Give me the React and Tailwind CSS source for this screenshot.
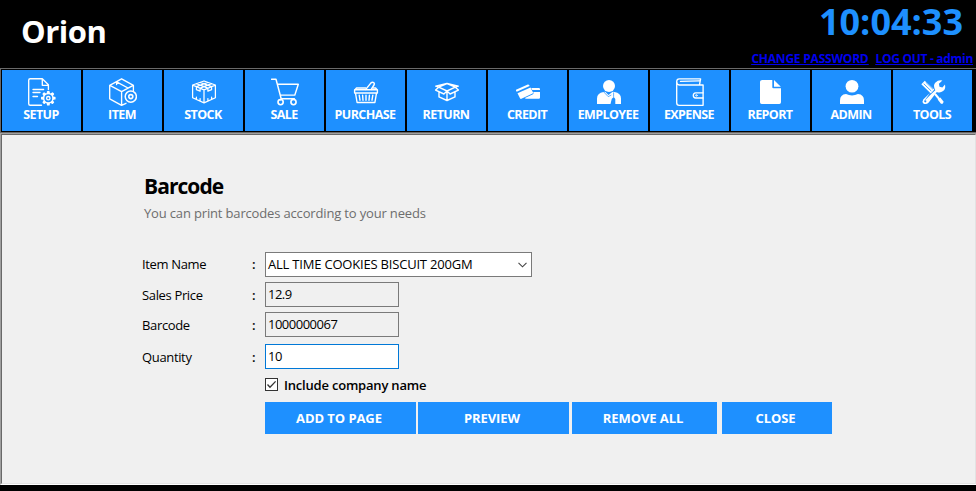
import React from "react";

const line = { fill: "none", stroke: "white", strokeWidth: 1.35, strokeLinejoin: "round", strokeLinecap: "round" };

function Icon({ children }) {
  return (
    <svg viewBox="0 0 28 28" className="ml-[26px] block size-7 shrink-0 self-start" {...line}>
      {children}
    </svg>
  );
}

const teeth = [0, 45, 90, 135, 180, 225, 270, 315];

const icons = {
  setup: (
    <>
      <path d="M13.5 27.2H2.2Q.7 27.2.7 25.7V2.2Q.7.7 2.2.7H14.3L20.4 6.8V11.5M14.3.9V7.3H20.4M5 11.5H15.6M5 14.5H12M5 18.5H9.5" />
      <circle cx="20.3" cy="20.2" r="4.7" strokeWidth="1.5" />
      <circle cx="20.3" cy="20.2" r="1.7" />
      {teeth.map((a) => (
        <path key={a} d="M19.4 15L19.6 13.6H21L21.2 15Z" fill="white" transform={`rotate(${a} 20.3 20.2)`} />
      ))}
    </>
  ),
  item: (
    <>
      <path d="M17 25.3L12.6 27.3.7 20.8V7.3L12.6.8 24.4 7.3V12.5M.9 7.4L12.6 13.6 24.2 7.4M12.6 13.6V27M7.6 3.8L19 10M7.6 3.8V6.6" />
      <circle cx="21.8" cy="18.6" r="5.6" strokeWidth="1.5" />
      <circle cx="21.8" cy="18.6" r="2" strokeWidth="1.6" />
    </>
  ),
  stock: (
    <path d="M2.6 7L14 3 25.4 7V19.8L14 24.9 2.6 19.8ZM2.8 7.2L14 11.8 25.2 7.2M14 11.8V24.7M6.4 5.7L17.9 10.2V13.2L21.6 11.7V8.7L10.2 4.4M21.6 5.7L10.1 10.2V13.2L6.4 11.7V8.7L17.8 4.4M6.4 19V21M10.1 20.6V22.5M17.9 20.6V22.5M21.6 19V21" strokeWidth="1.25" />
  ),
  sale: (
    <>
      <path d="M.6 1.2H5L10.2 20.8H23.4M6.3 6.2H27.3L23.8 17.1H9.3M10.2 20.8L9.1 22" strokeWidth="1.45" />
      <circle cx="9.6" cy="24.1" r="2.6" strokeWidth="1.6" />
      <circle cx="22.5" cy="24.1" r="2.6" strokeWidth="1.6" />
    </>
  ),
  purchase: (
    <>
      <path d="M2.6 11.8H25.4V15H2.6ZM3.5 15.2L5.1 24.5H22.9L24.5 15.2M3 11.7L4.5 10H13.7M21 10H23.6L25 11.7" strokeWidth="1.4" />
      <path d="M7.2 17.2L8 22.2M10.6 17.2L11 22.2M14 17.2V22.2M17.4 17.2L17 22.2M20.8 17.2L20 22.2" strokeWidth="1.4" />
      <path d="M13.8 11.4L19 4.9Q20.5 3.6 21.9 4.8 22.8 5.8 22 7L19.2 11.4" strokeWidth="1.5" />
    </>
  ),
  return: (
    <path d="M14 5.7L22.3 9.2 14 13 5.7 9.2ZM5.7 9.2L2.6 12.1 10.9 16 14 13M22.3 9.2L25.4 12.1 17.1 16 14 13M5.7 9.2L2.7 8.2 14 5.4M22.3 9.2L25.3 8.2 14 5.4M6 14V18.9L14 22.5 22 18.9V14M14 13.2V22.3" strokeWidth="1.4" />
  ),
  credit: (
    <g fill="white" stroke="none">
      <path d="M2 11.8L13.8 6.5Q14.6 6.2 15.1 7L15.6 7.9 2.7 13.7L2 12.8Z" />
      <path d="M3.5 15.2L16.5 9.4 19 14.5Q19.2 15.2 18.6 15.6L7.4 20.8Q6.6 21.1 6.1 20.4Z" />
      <path d="M17.2 10H24.8Q26 10 26 11.2V12H18.3ZM19.3 14H26V19.6Q26 20.8 24.8 20.8H12.2Q11 20.8 10.9 20L19 16.3Q20 15.6 19.3 14Z" />
    </g>
  ),
  employee: (
    <g fill="white" stroke="none">
      <circle cx="14" cy="8" r="6" />
      <path d="M2 26V20.5Q2 15.2 8.5 14L10.2 13.7 13.5 17 17.6 13.7 19.5 14Q26 15.2 26 20.5V26H20.3V21L18.8 19 16.8 20.8 15.5 26Z" />
      <path d="M9 14.2L13.2 18.6 16 17.2M18.6 14.8V18.5" fill="none" stroke="#1e90ff" strokeWidth=".7" />
    </g>
  ),
  expense: (
    <>
      <path d="M3.3 7H27.1V27.3H3.2Q.7 27.2.7 24.7V3.5Q.8.8 3.3.8H24.6L23.5 6.8M3.3 7Q.8 6.8.8 4M4.5 3.4L23 2.8" />
      <path d="M27 14.8H19.7Q17.3 15 17.3 17.4 17.3 19.8 19.7 20H27" />
      <circle cx="20.4" cy="17.4" r=".8" strokeWidth=".8" />
    </>
  ),
  report: (
    <g fill="white" stroke="none">
      <path d="M5.2 2H15.3V9.2Q15.3 10.3 16.4 10.3H24V24.3Q24 26 22.3 26H4.7Q3 26 3 24.3V3.7Q3 2 5.2 2Z" />
      <path d="M17 2.1L23.8 8.7H17Z" />
    </g>
  ),
  admin: (
    <g fill="white" stroke="none">
      <ellipse cx="14" cy="8.2" rx="6.4" ry="6.3" />
      <path d="M2 26V22.4Q2 16.6 8 16 14 18.8 20 16 26 16.6 26 22.4V26Z" />
    </g>
  ),
  tools: (
    <>
      <path d="M5 23.3L12.5 15.8 16.3 12.2Q13.6 6.9 16.5 4.4 19.5 1.6 23.4 2.6L19.9 5.7 20.5 8.7 23.4 9.4 26 6.4Q26.9 10.9 24.1 13.1 21.2 15.4 17.8 14L9.7 24.4Q7.5 26.9 4.6 25.7 2.7 23.7 4.2 21.6L11 15Z" fill="white" stroke="none" />
      <path d="M2.3 6.2L5.8 2.7 15.3 11.5 11.8 15.4Z" fill="white" stroke="none" />
      <path d="M5 6L12 12.8M7 4.4L13.7 11" stroke="#1e90ff" strokeWidth=".8" />
      <path d="M16.5 16.5L19.4 20M18 18.2L23.2 24.6" strokeWidth="2" />
      <path d="M20 20.5L23.5 25" strokeWidth="3.4" strokeLinecap="butt" />
      <circle cx="6.3" cy="23.3" r="1.1" fill="#1e90ff" stroke="none" />
    </>
  ),
};

const menu = [
  ["setup", "SETUP"], ["item", "ITEM"], ["stock", "STOCK"], ["sale", "SALE"],
  ["purchase", "PURCHASE"], ["return", "RETURN"], ["credit", "CREDIT"], ["employee", "EMPLOYEE"],
  ["expense", "EXPENSE"], ["report", "REPORT"], ["admin", "ADMIN"], ["tools", "TOOLS"],
];

function Row({ label, className, labelClass = "pt-1", children }) {
  return (
    <div className={`flex h-[25px] ${className}`}>
      <span className={`w-[109px] tracking-[-0.35px] ${labelClass}`}>{label}</span>
      <span className={`w-[14px] pl-px font-semibold ${labelClass}`}>:</span>
      {children}
    </div>
  );
}

function Field({ className, children }) {
  return <div className={`w-[134px] border pt-0.5 pl-0.5 tracking-[-0.5px] ${className}`}>{children}</div>;
}

function ActionButton({ className, children }) {
  return (
    <button className={`h-8 bg-[#1e90ff] pr-[3px] text-[13px] font-bold tracking-[-0.08px] text-white ${className}`}>
      {children}
    </button>
  );
}

export default function App() {
  return (
    <div className="flex h-[491px] w-[976px] flex-col overflow-hidden bg-black font-['Open_Sans','Noto_Sans',sans-serif] text-[13px] leading-[19px]">
      <header className="flex h-[68px] shrink-0 justify-between">
        <h1 className="pt-[10px] pl-[21px] text-[31px] leading-[42px] font-bold tracking-[-0.5px] text-white">Orion</h1>
        <div className="flex flex-col items-end">
          <div className="h-[49px] pr-[13px] text-[36px] leading-[43px] font-bold text-[#1e90ff]">10:04:33</div>
          <div className="flex gap-[7px] pr-[3px] text-[12px] font-bold text-[#0000ee] underline">
            <a className="tracking-[-0.22px]">CHANGE PASSWORD</a>
            <a className="tracking-[-0.3px]">LOG OUT - admin</a>
          </div>
        </div>
      </header>

      <nav className="flex h-16 shrink-0 gap-0.5 border-t border-l border-[#696969] pt-px pl-px">
        {menu.map(([id, label]) => (
          <button key={id} className="flex h-[61px] w-[79px] shrink-0 flex-col items-center bg-[#1e90ff] pt-2 text-white">
            <Icon>{icons[id]}</Icon>
            <span className="pr-px text-[12.5px] leading-[17px] font-bold tracking-[-0.6px]">{label}</span>
          </button>
        ))}
      </nav>
      <div className="h-px shrink-0 bg-[#696969]" />
      <div className="h-px shrink-0 bg-[#a0a0a0]" />

      <div className="flex h-[351px] shrink-0 border-b border-l border-b-white border-l-[#a0a0a0]">
        <main className="flex-1 border border-t-[#696969] border-r-[#e3e3e3] border-b-[#e3e3e3] border-l-[#696969] bg-[#f0f0f0] pt-[37px] pl-[140px] text-black">
          <h2 className="pl-0.5 text-[21px] leading-[28px] font-bold tracking-[-0.95px]">Barcode</h2>
          <p className="pt-1 pl-0.5 tracking-[-0.16px] text-[#6d6d6d]">You can print barcodes according to your needs</p>

          <Row label="Item Name" className="mt-[29px]" labelClass="pt-[3px]">
            <div className="flex w-[267px] items-center justify-between border border-[#7a7a7a] bg-white pr-1 pl-0.5">
              <span className="tracking-[-0.2px]">ALL TIME COOKIES BISCUIT 200GM</span>
              <svg viewBox="0 0 9 6" className="h-1.5 w-[9px]" fill="none" stroke="#444" strokeWidth="1.1">
                <path d="M.5 .8L4.5 4.8L8.5 .8" />
              </svg>
            </div>
          </Row>
          <Row label="Sales Price" className="mt-[5px]">
            <Field className="border-[#7a7a7a]">12.9</Field>
          </Row>
          <Row label="Barcode" className="mt-[5px]">
            <Field className="border-[#7a7a7a]">1000000067</Field>
          </Row>
          <Row label="Quantity" className="mt-[7px]">
            <Field className="border-[#0078d7] bg-white">10</Field>
          </Row>

          <label className="mt-[6px] ml-[123px] flex h-[19px] items-center gap-1.5">
            <svg viewBox="0 0 13 13" className="size-[13px]">
              <rect x=".5" y=".5" width="12" height="12" fill="white" stroke="#333" />
              <path d="M2.5 6.5L5 9.3L10.6 3.4" fill="none" stroke="#333" strokeWidth="1.3" />
            </svg>
            <span className="pt-px font-semibold tracking-[-0.2px]">Include company name</span>
          </label>

          <div className="mt-[8px] ml-[123px] flex">
            <ActionButton className="w-[151px]">ADD TO PAGE</ActionButton>
            <ActionButton className="ml-0.5 w-[151px]">PREVIEW</ActionButton>
            <ActionButton className="ml-[3px] w-[145px]">REMOVE ALL</ActionButton>
            <ActionButton className="ml-[5px] w-[110px]">CLOSE</ActionButton>
          </div>
        </main>
      </div>
    </div>
  );
}
